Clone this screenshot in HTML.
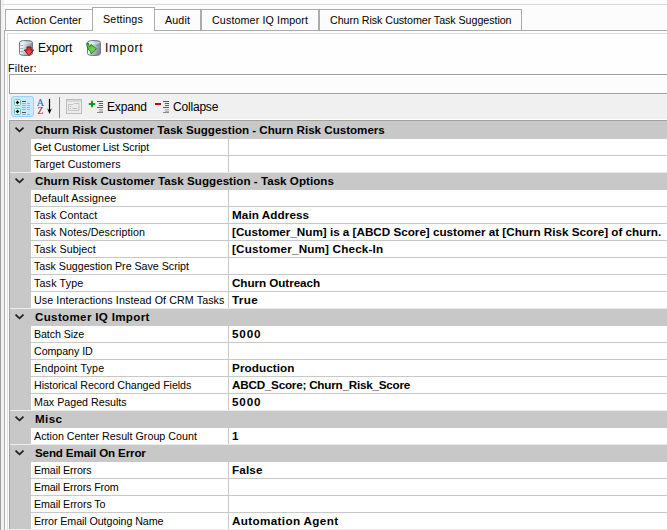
<!DOCTYPE html>
<html><head><meta charset="utf-8">
<style>
*{box-sizing:border-box}
html,body{margin:0;padding:0}
body{width:667px;height:530px;overflow:hidden;position:relative;background:#fcfcfc;font-family:"Liberation Sans",sans-serif;font-size:10.7px;color:#000}
.a{position:absolute}
.t{position:absolute;white-space:nowrap;line-height:13px}
.tab{position:absolute;border:1px solid #acacac;border-bottom:none;background:#fcfcfc}
.cat{position:absolute;left:10px;width:657px;height:17px;background:#c8c8c8}
.cat .chev{position:absolute;left:4px;top:5px}
.cat .ct{position:absolute;left:25px;top:2px;font-weight:bold;font-size:11.6px;white-space:nowrap;line-height:14px}
.prop{position:absolute;left:10px;width:657px;height:17px;background:#c8c8c8}
.prop .nm{position:absolute;left:21px;top:1px;width:197px;height:16px;background:#fff;padding-left:3px;white-space:nowrap;overflow:hidden;line-height:17px}
.prop .vl{position:absolute;left:219px;top:1px;right:0;height:16px;background:#fff;padding-left:3px;white-space:nowrap;overflow:hidden;font-weight:bold;font-size:11.7px;line-height:15px}
</style></head><body>
<div class="a" style="left:0;top:0;width:1px;height:530px;background:#a0a0a0"></div>
<div class="a" style="left:1px;top:0;width:3px;height:530px;background:#f2f2f2"></div>
<div class="a" style="left:2px;top:4px;width:665px;height:1px;background:#dadada"></div>
<div class="a" style="left:4px;top:30px;width:663px;height:500px;border-left:1px solid #acacac;border-top:1px solid #acacac;background:#fefefe"></div>
<div class="a" style="left:7px;top:33px;width:660px;height:497px;border-left:1px solid #dcdcdc;border-top:1px solid #dcdcdc;background:#fefefe"></div>
<div class="tab" style="left:5px;top:9px;width:88px;height:21px"></div>
<div class="tab" style="left:154px;top:9px;width:47px;height:21px"></div>
<div class="tab" style="left:201px;top:9px;width:118px;height:21px"></div>
<div class="tab" style="left:319px;top:9px;width:203px;height:21px"></div>
<div class="tab" style="left:92px;top:7px;width:63px;height:24px;background:#fff"></div>
<span class="t" id="tab_ac" style="left:16px;top:14px;letter-spacing:0.075px">Action Center</span>
<span class="t" id="tab_set" style="left:103px;top:13px;letter-spacing:0.165px">Settings</span>
<span class="t" id="tab_aud" style="left:165px;top:14px;letter-spacing:0.135px">Audit</span>
<span class="t" id="tab_ciq" style="left:212px;top:14px;letter-spacing:0.129px">Customer IQ Import</span>
<span class="t" id="tab_crc" style="left:330px;top:14px;letter-spacing:-0.053px">Churn Risk Customer Task Suggestion</span>
<svg class="a" style="left:18px;top:39px" width="17" height="18" viewBox="0 0 17 18">
<defs><linearGradient id="cyl" x1="0" x2="1" y1="0" y2="0.3"><stop offset="0" stop-color="#c4ced6"/><stop offset="0.25" stop-color="#f2f7fb"/><stop offset="0.6" stop-color="#b4c2ce"/><stop offset="1" stop-color="#7f8e9a"/></linearGradient>
<linearGradient id="red" x1="0" x2="0" y1="0" y2="1"><stop offset="0" stop-color="#d42424"/><stop offset="1" stop-color="#f05a5a"/></linearGradient></defs>
<path d="M1.5 3.5 Q1.5 1.5 8 1.5 Q14.5 1.5 14.5 3.5 L14.5 14.5 Q14.5 16.5 8 16.5 Q1.5 16.5 1.5 14.5 Z" fill="url(#cyl)" stroke="#6f7a84" stroke-width="1"/>
<path d="M2.5 3.5 Q8 5.5 13.5 3.5" fill="none" stroke="#e4ebf0" stroke-width="0.9"/>
<path d="M2.5 6.5 H5 M2.5 9.5 H5 M2.5 12.5 H5" stroke="#8896a2" stroke-width="0.8"/>
<path d="M9 8 H13 V11 H15.6 L11 16.6 L6.4 11 H9 Z" fill="url(#red)" stroke="#8c0c0c" stroke-width="1"/>
</svg>
<svg class="a" style="left:86px;top:39px" width="17" height="18" viewBox="0 0 17 18">
<defs><linearGradient id="grn" x1="0" x2="1" y1="0" y2="1"><stop offset="0" stop-color="#3fb82e"/><stop offset="1" stop-color="#86dc72"/></linearGradient></defs>
<path d="M1.5 3.5 Q1.5 1.5 8 1.5 Q14.5 1.5 14.5 3.5 L14.5 14.5 Q14.5 16.5 8 16.5 Q1.5 16.5 1.5 14.5 Z" fill="url(#cyl)" stroke="#6f7a84" stroke-width="1"/>
<path d="M2.5 3.5 Q8 5.5 13.5 3.5" fill="none" stroke="#e4ebf0" stroke-width="0.9"/>
<path d="M10 6.5 H13.5 M10 9.5 H13.5 M10 12.5 H13.5" stroke="#8896a2" stroke-width="0.8"/>
<path d="M0.6 4.2 L2.6 4.2 Q2.8 7 3.8 7.9 L5 5.4 L10.4 9.8 L5.2 14.9 L4.6 12.3 Q1.4 11.4 0.6 4.2 Z" fill="url(#grn)" stroke="#1e7a16" stroke-width="0.9"/>
</svg>
<span class="t" id="exp" style="left:38px;top:42px;font-size:12px;letter-spacing:-0.090px">Export</span>
<span class="t" id="imp" style="left:105px;top:42px;font-size:12px;letter-spacing:0.720px">Import</span>
<span class="t" id="filt" style="left:8px;top:62px;letter-spacing:0.300px">Filter:</span>
<div class="a" style="left:9px;top:74px;width:658px;height:20px;border:1px solid #a0a0a0;border-right:none;background:#fcfcfc;box-shadow:inset 1px 1px 0 #fff"></div>
<div class="a" style="left:9px;top:94px;width:658px;height:25px;background:#f0f0f0"></div>
<div class="a" style="left:9px;top:119px;width:658px;height:1px;background:#fff"></div>
<div class="a" style="left:11px;top:96px;width:23px;height:21px;background:#cce8ff;border:1px solid #99d1ff;border-radius:3px"></div>
<svg class="a" style="left:13px;top:98px" width="20" height="18" viewBox="0 0 20 18">
<defs><linearGradient id="pt1" gradientUnits="userSpaceOnUse" x1="9" x2="13" y1="0" y2="0"><stop offset="0" stop-color="#b09ae0"/><stop offset="0.5" stop-color="#9a9ad0"/><stop offset="1" stop-color="#6cc8bc"/></linearGradient>
<linearGradient id="pt2" gradientUnits="userSpaceOnUse" x1="14" x2="17" y1="0" y2="0"><stop offset="0" stop-color="#b09ae0"/><stop offset="1" stop-color="#6cc8bc"/></linearGradient></defs>
<rect x="1.5" y="1.5" width="6" height="6" rx="1.2" fill="#fff" stroke="#5cc6b8" stroke-width="1"/>
<rect x="1.5" y="10.5" width="6" height="6" rx="1.2" fill="#fff" stroke="#5cc6b8" stroke-width="1"/>
<path d="M4.5 2.8 V6.2 M2.8 4.5 H6.2 M4.5 11.8 V15.2 M2.8 13.5 H6.2" stroke="#000" stroke-width="1.3"/>
<path d="M9 3.5 H13" stroke="#505050" stroke-width="1"/>
<path d="M9 14.5 H13" stroke="#505050" stroke-width="1"/>
<path d="M9 5.5 H13 M9 7.5 H13 M9 9.5 H13 M9 11.5 H13 M9 16.5 H13" stroke="url(#pt1)" stroke-width="1" opacity="0.8"/>
<path d="M14 5.5 H17 M14 7.5 H17 M14 9.5 H17 M14 11.5 H17 M14 16.5 H17" stroke="url(#pt2)" stroke-width="1" opacity="0.8"/>
</svg>
<svg class="a" style="left:36px;top:97px" width="18" height="19" viewBox="0 0 18 19">
<text x="0.8" y="9.2" font-family="Liberation Serif" font-size="10" fill="#2d6ad8" stroke="#2d6ad8" stroke-width="0.15">A</text>
<text x="1.6" y="17.2" font-family="Liberation Serif" font-size="9.6" fill="#8a3448" stroke="#8a3448" stroke-width="0.1">Z</text>
<path d="M13.5 1.8 V14" stroke="#000" stroke-width="1.2"/>
<path d="M11.2 11.6 L13.5 17 L15.8 11.6 L13.5 13.2 Z" fill="#000"/>
</svg>
<div class="a" style="left:59px;top:97px;width:1px;height:21px;background:#8c8c8c"></div>
<svg class="a" style="left:65px;top:98px" width="18" height="17" viewBox="0 0 18 17">
<rect x="1.5" y="1.5" width="15" height="14" fill="#ececec" stroke="#bdbdbd" stroke-width="1"/>
<path d="M2 3 H16" stroke="#cfcfcf" stroke-width="1.5"/>
<path d="M3.5 6.5 H8 L9 5.5 H14 V12.5 H3.5 Z" fill="none" stroke="#c4c4c4" stroke-width="1"/>
<path d="M5 8.5 H6 M5 10.5 H6 M7.5 10.5 H12" stroke="#b8b8b8" stroke-width="1"/>
</svg>
<svg class="a" style="left:88px;top:100px" width="8" height="8" viewBox="0 0 8 8">
<path d="M4 0.8 V7.2 M0.8 4 H7.2" stroke="#129a12" stroke-width="2"/>
</svg><svg class="a" style="left:96px;top:100px" width="8" height="14" viewBox="0 0 8 14">
<path d="M1 1.5 H7 M1 7.5 H7" stroke="#5a5a5a" stroke-width="1"/>
<path d="M3 3.5 H7 M3 5.5 H7" stroke="#606060" stroke-width="1"/>
<path d="M2 3.5 H3 M2 5.5 H3" stroke="#d8d8d8" stroke-width="1"/>
<path d="M3 9.5 H7 M3 11.5 H7" stroke="#b4b4b4" stroke-width="1"/>
<path d="M3 10.5 H7" stroke="#d0d0d0" stroke-width="1"/>
<path d="M1 12.5 H7" stroke="#8a8a8a" stroke-width="1"/>
</svg>
<div class="a" style="left:155px;top:103px;width:6px;height:2px;background:#cc0000"></div><svg class="a" style="left:162px;top:100px" width="8" height="14" viewBox="0 0 8 14">
<path d="M1 1.5 H7 M1 7.5 H7" stroke="#5a5a5a" stroke-width="1"/>
<path d="M3 3.5 H7 M3 5.5 H7" stroke="#606060" stroke-width="1"/>
<path d="M2 3.5 H3 M2 5.5 H3" stroke="#d8d8d8" stroke-width="1"/>
<path d="M3 9.5 H7 M3 11.5 H7" stroke="#b4b4b4" stroke-width="1"/>
<path d="M3 10.5 H7" stroke="#d0d0d0" stroke-width="1"/>
<path d="M1 12.5 H7" stroke="#8a8a8a" stroke-width="1"/>
</svg>
<span class="t" id="expand" style="left:107px;top:101px;font-size:12px;letter-spacing:-0.180px">Expand</span>
<span class="t" id="collapse" style="left:173px;top:101px;font-size:12px;letter-spacing:-0.192px">Collapse</span>
<div class="a" style="left:9px;top:120px;width:658px;height:410px;border-left:1px solid #a0a0a0;border-top:1px solid #a0a0a0;background:#c8c8c8"></div>
<div class="cat" style="top:121px"><svg class="chev" width="12" height="8" viewBox="0 0 12 8"><path d="M1.5 1.6 L5.5 5.3 L9.5 1.6" fill="none" stroke="#1e1e1e" stroke-width="1.7"/></svg><span class="ct" id="c0" style="letter-spacing:-0.008px">Churn Risk Customer Task Suggestion - Churn Risk Customers</span></div>
<div class="prop" style="top:138px"><div class="nm"><span id="n1" style="letter-spacing:-0.052px">Get Customer List Script</span></div><div class="vl"><span id="v1"></span></div></div>
<div class="prop" style="top:155px"><div class="nm"><span id="n2" style="letter-spacing:0.144px">Target Customers</span></div><div class="vl"><span id="v2"></span></div></div>
<div class="a" style="left:10px;top:172px;width:657px;height:1px;background:#ececec;z-index:2"></div>
<div class="cat" style="top:172px"><svg class="chev" width="12" height="8" viewBox="0 0 12 8"><path d="M1.5 1.6 L5.5 5.3 L9.5 1.6" fill="none" stroke="#1e1e1e" stroke-width="1.7"/></svg><span class="ct" id="c3" style="letter-spacing:0.034px">Churn Risk Customer Task Suggestion - Task Options</span></div>
<div class="prop" style="top:189px"><div class="nm"><span id="n4" style="letter-spacing:0.132px">Default Assignee</span></div><div class="vl"><span id="v4"></span></div></div>
<div class="prop" style="top:206px"><div class="nm"><span id="n5" style="letter-spacing:0.123px">Task Contact</span></div><div class="vl"><span id="v5" style="letter-spacing:0.082px">Main Address</span></div></div>
<div class="prop" style="top:223px"><div class="nm"><span id="n6" style="letter-spacing:0.080px">Task Notes/Description</span></div><div class="vl"><span id="v6" style="letter-spacing:-0.010px">[Customer_Num] is a [ABCD Score] customer at [Churn Risk Score] of churn.</span></div></div>
<div class="prop" style="top:240px"><div class="nm"><span id="n7" style="letter-spacing:0.103px">Task Subject</span></div><div class="vl"><span id="v7" style="letter-spacing:0.169px">[Customer_Num] Check-In</span></div></div>
<div class="prop" style="top:257px"><div class="nm"><span id="n8" style="letter-spacing:-0.024px">Task Suggestion Pre Save Script</span></div><div class="vl"><span id="v8"></span></div></div>
<div class="prop" style="top:274px"><div class="nm"><span id="n9" style="letter-spacing:0.169px">Task Type</span></div><div class="vl"><span id="v9" style="letter-spacing:-0.069px">Churn Outreach</span></div></div>
<div class="prop" style="top:291px"><div class="nm"><span id="n10" style="letter-spacing:0.097px">Use Interactions Instead Of CRM Tasks</span></div><div class="vl"><span id="v10" style="letter-spacing:0.330px">True</span></div></div>
<div class="a" style="left:10px;top:308px;width:657px;height:1px;background:#ececec;z-index:2"></div>
<div class="cat" style="top:308px"><svg class="chev" width="12" height="8" viewBox="0 0 12 8"><path d="M1.5 1.6 L5.5 5.3 L9.5 1.6" fill="none" stroke="#1e1e1e" stroke-width="1.7"/></svg><span class="ct" id="c11" style="letter-spacing:0.325px">Customer IQ Import</span></div>
<div class="prop" style="top:325px"><div class="nm"><span id="n12" style="letter-spacing:-0.100px">Batch Size</span></div><div class="vl"><span id="v12" style="letter-spacing:0.840px">5000</span></div></div>
<div class="prop" style="top:342px"><div class="nm"><span id="n13" style="letter-spacing:-0.070px">Company ID</span></div><div class="vl"><span id="v13"></span></div></div>
<div class="prop" style="top:359px"><div class="nm"><span id="n14" style="letter-spacing:0.162px">Endpoint Type</span></div><div class="vl"><span id="v14" style="letter-spacing:0.090px">Production</span></div></div>
<div class="prop" style="top:376px"><div class="nm"><span id="n15" style="letter-spacing:-0.060px">Historical Record Changed Fields</span></div><div class="vl"><span id="v15" style="letter-spacing:-0.228px">ABCD_Score; Churn_Risk_Score</span></div></div>
<div class="prop" style="top:393px"><div class="nm"><span id="n16">Max Paged Results</span></div><div class="vl"><span id="v16" style="letter-spacing:0.840px">5000</span></div></div>
<div class="a" style="left:10px;top:410px;width:657px;height:1px;background:#ececec;z-index:2"></div>
<div class="cat" style="top:410px"><svg class="chev" width="12" height="8" viewBox="0 0 12 8"><path d="M1.5 1.6 L5.5 5.3 L9.5 1.6" fill="none" stroke="#1e1e1e" stroke-width="1.7"/></svg><span class="ct" id="c17" style="letter-spacing:0.390px">Misc</span></div>
<div class="prop" style="top:427px"><div class="nm"><span id="n18" style="letter-spacing:0.025px">Action Center Result Group Count</span></div><div class="vl"><span id="v18">1</span></div></div>
<div class="a" style="left:10px;top:444px;width:657px;height:1px;background:#ececec;z-index:2"></div>
<div class="cat" style="top:444px"><svg class="chev" width="12" height="8" viewBox="0 0 12 8"><path d="M1.5 1.6 L5.5 5.3 L9.5 1.6" fill="none" stroke="#1e1e1e" stroke-width="1.7"/></svg><span class="ct" id="c19" style="letter-spacing:-0.140px">Send Email On Error</span></div>
<div class="prop" style="top:461px"><div class="nm"><span id="n20" style="letter-spacing:-0.103px">Email Errors</span></div><div class="vl"><span id="v20" style="letter-spacing:0.135px">False</span></div></div>
<div class="prop" style="top:478px"><div class="nm"><span id="n21" style="letter-spacing:-0.125px">Email Errors From</span></div><div class="vl"><span id="v21"></span></div></div>
<div class="prop" style="top:495px"><div class="nm"><span id="n22" style="letter-spacing:-0.096px">Email Errors To</span></div><div class="vl"><span id="v22"></span></div></div>
<div class="prop" style="top:512px"><div class="nm"><span id="n23" style="letter-spacing:-0.075px">Error Email Outgoing Name</span></div><div class="vl"><span id="v23" style="letter-spacing:0.348px">Automation Agent</span></div></div>
<div class="a" style="left:9px;top:529px;width:658px;height:1px;background:#ececec;z-index:2"></div>
</body></html>
